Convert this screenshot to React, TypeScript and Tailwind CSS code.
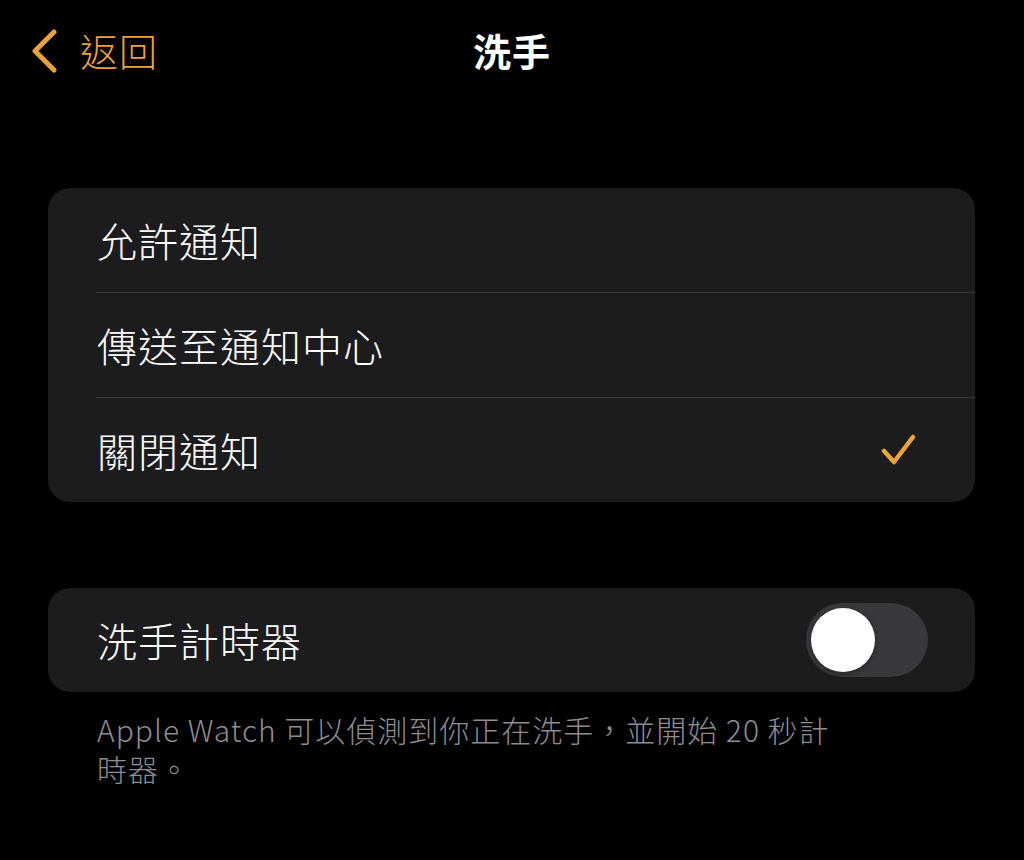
import React from "react";

const font = { fontFamily: '"Noto Sans CJK TC", "Noto Sans", sans-serif' };

export default function App() {
  return (
    <div className="w-[1024px] h-[860px] bg-black text-white overflow-hidden" style={font}>
      {/* Header */}
      <div className="relative h-[100px] flex items-center">
        <div className="flex items-center pl-[30px] gap-[22px] text-[#eba23b]">
          <svg width="28" height="44" viewBox="0 0 28 44" className="mt-[2px]">
            <path d="M24 3 L5 22 L24 41" fill="none" stroke="#eba23b" strokeWidth="5" strokeLinecap="round" strokeLinejoin="round" />
          </svg>
          <span className="text-[38px] leading-none tracking-[1px] font-light">返回</span>
        </div>
        <div className="absolute left-0 right-0 top-0 h-[100px] flex items-center justify-center pointer-events-none">
          <span className="text-[38px] leading-none font-semibold tracking-[1px]">洗手</span>
        </div>
      </div>

      {/* Card 1 */}
      <div className="mt-[88px] mx-[48px] w-[927px] rounded-[22px] bg-[#1c1c1e] overflow-hidden font-light">
        <div className="h-[104px] flex items-center pl-[49px] text-[40px] tracking-[1px]">允許通知</div>
        <div className="ml-[48px] h-px bg-[#38383a]" />
        <div className="h-[104px] flex items-center pl-[49px] text-[40px] tracking-[1px]">傳送至通知中心</div>
        <div className="ml-[48px] h-px bg-[#38383a]" />
        <div className="h-[104px] flex items-center justify-between pl-[49px] pr-[56px] text-[40px] tracking-[1px]">
          <span>關閉通知</span>
          <svg width="40" height="38" viewBox="0 0 40 38">
            <path d="M5 20 L15 31 L34 6" fill="none" stroke="#eba23b" strokeWidth="4.5" strokeLinecap="round" strokeLinejoin="round" />
          </svg>
        </div>
      </div>

      {/* Card 2 */}
      <div className="mt-[86px] mx-[48px] w-[927px] h-[104px] rounded-[22px] bg-[#1c1c1e] flex items-center justify-between pl-[49px] pr-[47px]">
        <span className="text-[40px] tracking-[1px] font-light">洗手計時器</span>
        <div className="w-[122px] h-[74px] rounded-full bg-[#39393d] flex items-center pl-[5px]">
          <div className="w-[64px] h-[64px] rounded-full bg-white shadow-[0_2px_6px_rgba(0,0,0,0.35)]" />
        </div>
      </div>

      {/* Footer */}
      <div className="mt-[18px] pl-[97px] text-[30px] leading-[39px] tracking-[1px] text-[#8d8d93] font-light">
        <div>Apple Watch 可以偵測到你正在洗手，並開始 20 秒計</div>
        <div>時器。</div>
      </div>
    </div>
  );
}
